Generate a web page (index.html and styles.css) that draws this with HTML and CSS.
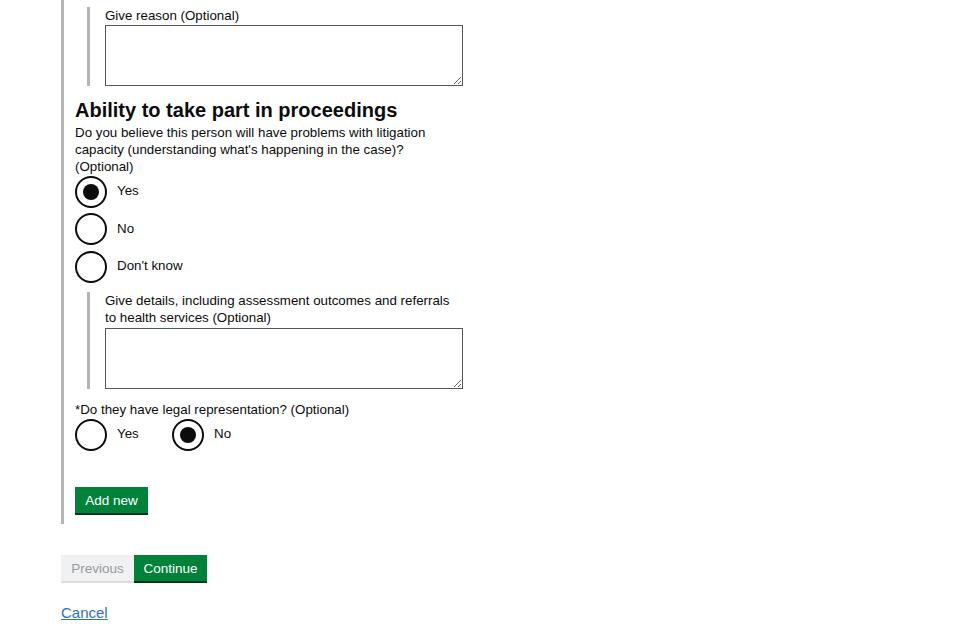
FILE: index.html
```html
<!DOCTYPE html>
<html lang="en">
<head>
<meta charset="utf-8">
<title>Ability to take part in proceedings</title>
<link rel="stylesheet" href="styles.css">
</head>
<body>
<main class="page">
  <div class="section">
    <div class="conditional">
      <label class="label" for="reason">Give reason (Optional)</label>
      <textarea id="reason" class="textarea"></textarea>
    </div>

    <h2 class="heading">Ability to take part in proceedings</h2>
    <p class="hint">Do you believe this person will have problems with litigation capacity (understanding what's happening in the case)? (Optional)</p>

    <div class="radios">
      <div class="radio"><span class="radio-circle checked"></span><span class="radio-label">Yes</span></div>
      <div class="radio"><span class="radio-circle"></span><span class="radio-label">No</span></div>
      <div class="radio"><span class="radio-circle"></span><span class="radio-label">Don't know</span></div>
    </div>

    <div class="conditional conditional-2">
      <label class="label" for="details">Give details, including assessment outcomes and referrals<br>to health services (Optional)</label>
      <textarea id="details" class="textarea textarea-2"></textarea>
    </div>

    <p class="question">*Do they have legal representation? (Optional)</p>
    <div class="radios-inline">
      <div class="radio radio-inline"><span class="radio-circle"></span><span class="radio-label">Yes</span></div>
      <div class="radio radio-inline"><span class="radio-circle checked"></span><span class="radio-label">No</span></div>
    </div>

    <button class="btn btn-green btn-add" type="button">Add new</button>
  </div>

  <div class="nav-buttons">
    <button class="btn btn-grey" type="button">Previous</button>
    <button class="btn btn-green btn-continue" type="button">Continue</button>
  </div>

  <a class="cancel" href="#">Cancel</a>
</main>
</body>
</html>
```

FILE: styles.css
```css
* { box-sizing: border-box; }

html, body {
  margin: 0;
  padding: 0;
  background: #ffffff;
}

body {
  font-family: "Liberation Sans", Arial, sans-serif;
  font-size: 13.33px;
  line-height: 17px;
  color: #0b0c0c;
}

.page {
  padding-left: 61px;
}

.section {
  border-left: 3px solid #b1b4b6;
  padding: 7px 0 11px 11px;
  width: 420px;
}

.conditional {
  margin-left: 12px;
  border-left: 3px solid #b1b4b6;
  padding-left: 15px;
  display: flex;
  flex-direction: column;
}

.label {
  display: block;
  font-size: 13.33px;
  line-height: 17px;
}

.textarea {
  display: block;
  margin: 1px 0 0 0;
  width: 358px;
  height: 61px;
  border: 1px solid #505a5f;
  border-radius: 0;
  padding: 4px;
  font-family: inherit;
  font-size: 13.33px;
  resize: both;
}

.heading {
  margin: 12px 0 2px 0;
  font-size: 20px;
  line-height: 24px;
  font-weight: bold;
}

.hint {
  margin: 0;
  width: 360px;
}

.radios {
  display: flex;
  flex-direction: column;
  gap: 5.5px;
  margin-top: 0.5px;
}

.radio {
  display: flex;
  align-items: center;
  height: 32px;
}

.radio-circle {
  width: 32px;
  height: 32px;
  border: 2px solid #0b0c0c;
  border-radius: 50%;
  display: flex;
  align-items: center;
  justify-content: center;
  flex: none;
  background: #fff;
}

.radio-circle.checked::after {
  content: "";
  width: 16px;
  height: 16px;
  border-radius: 50%;
  background: #0b0c0c;
}

.radio-label {
  margin-left: 10px;
  margin-top: -2px;
}

.conditional-2 {
  margin-top: 9px;
}

.textarea-2 {
  margin-top: 2px;
}

.question {
  margin: 12.5px 0 0 0;
}

.radios-inline {
  display: flex;
  margin-top: 0.5px;
}

.radio-inline {
  width: 97px;
}

.btn {
  font-family: "Liberation Sans", Arial, sans-serif;
  font-size: 13.5px;
  line-height: 17px;
  border: 0;
  border-radius: 0;
  margin: 0;
  cursor: pointer;
}

.btn-green {
  background: #00823b;
  color: #ffffff;
  box-shadow: 0 2px 0 #003618;
}

.btn-add {
  display: block;
  margin-top: 36px;
  width: 73px;
  height: 26px;
  padding: 5px 0 4px 0;
  text-align: center;
}

.nav-buttons {
  display: flex;
  margin-top: 31px;
}

.nav-buttons .btn {
  width: 73px;
  height: 26px;
  padding: 5px 0 4px 0;
  text-align: center;
}

.btn-grey {
  background: #f0f1f2;
  color: #9a9a9a;
  box-shadow: 0 2px 0 #dcdcdc;
}

.cancel {
  display: inline-block;
  margin-top: 22px;
  font-size: 15px;
  line-height: 20px;
  color: #2f6fbf;
  text-decoration: underline;
}
```
